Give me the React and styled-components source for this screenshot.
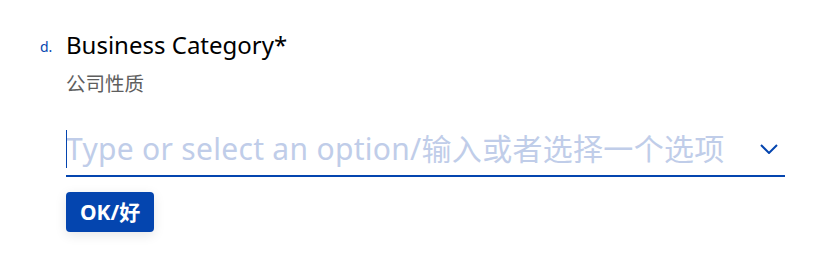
import React from "react";
import styled, { createGlobalStyle } from "styled-components";

const Global = createGlobalStyle`
  html, body { margin: 0; padding: 0; background: #fff; }
  body { font-family: "Noto Sans", "Noto Sans CJK SC", sans-serif; }
`;

const Page = styled.div`
  display: flex;
  padding: 29px 40px 0 40px;
  width: 825px;
  height: 266px;
  box-sizing: border-box;
`;

const Number = styled.div`
  width: 26px;
  flex: none;
  font-size: 14px;
  line-height: 18px;
  padding-top: 9px;
  color: #0445af;
`;

const Content = styled.div`
  width: 719px;
  display: flex;
  flex-direction: column;
`;

const Title = styled.div`
  font-size: 24px;
  line-height: 32px;
  color: #000;
`;

const Subtitle = styled.div`
  margin-top: 9px;
  font-family: "Noto Sans CJK SC", sans-serif;
  font-size: 19.5px;
  line-height: 25px;
  color: #5e5e5e;
`;

const Field = styled.div`
  position: relative;
  margin-top: 35px;
  display: flex;
  align-items: center;
  border-bottom: 2px solid #0445af;
  padding-bottom: 7px;
`;

const Input = styled.input`
  flex: 1;
  min-width: 0;
  border: none;
  outline: none;
  padding: 0;
  margin: 0;
  height: 38px;
  font-family: "Noto Sans", "Noto Sans CJK SC", sans-serif;
  font-size: 30px;
  letter-spacing: 0.3px;
  line-height: 38px;
  color: #0445af;
  background: transparent;
  caret-color: transparent;
  &::placeholder {
    color: #c0cde9;
    opacity: 1;
  }
`;

const Caret = styled.span`
  position: absolute;
  left: 0;
  top: 0;
  width: 1px;
  height: 38px;
  background: #0445af;
`;

const Chevron = styled.svg`
  flex: none;
  margin-right: 7px;
  margin-left: 8px;
`;

const Button = styled.button`
  align-self: flex-start;
  margin-top: 15px;
  height: 40px;
  padding: 0 14px;
  border: none;
  border-radius: 4px;
  background: #0445af;
  color: #fff;
  font-family: "Noto Sans", "Noto Sans CJK SC", sans-serif;
  font-weight: 700;
  font-size: 21px;
  line-height: 28px;
  box-shadow: 0 3px 12px 0 rgba(0, 0, 0, 0.1);
  cursor: pointer;
`;

export default function App() {
  return (
    <>
      <Global />
      <Page>
        <Number>d.</Number>
        <Content>
          <Title>Business Category*</Title>
          <Subtitle>公司性质</Subtitle>
          <Field>
            <Caret />
            <Input placeholder="Type or select an option/输入或者选择一个选项" />
            <Chevron width="18" height="10" viewBox="0 0 18 10">
              <polyline points="1,1 9,9 17,1" fill="none" stroke="#0445af" strokeWidth="2" />
            </Chevron>
          </Field>
          <Button>OK/好</Button>
        </Content>
      </Page>
    </>
  );
}
